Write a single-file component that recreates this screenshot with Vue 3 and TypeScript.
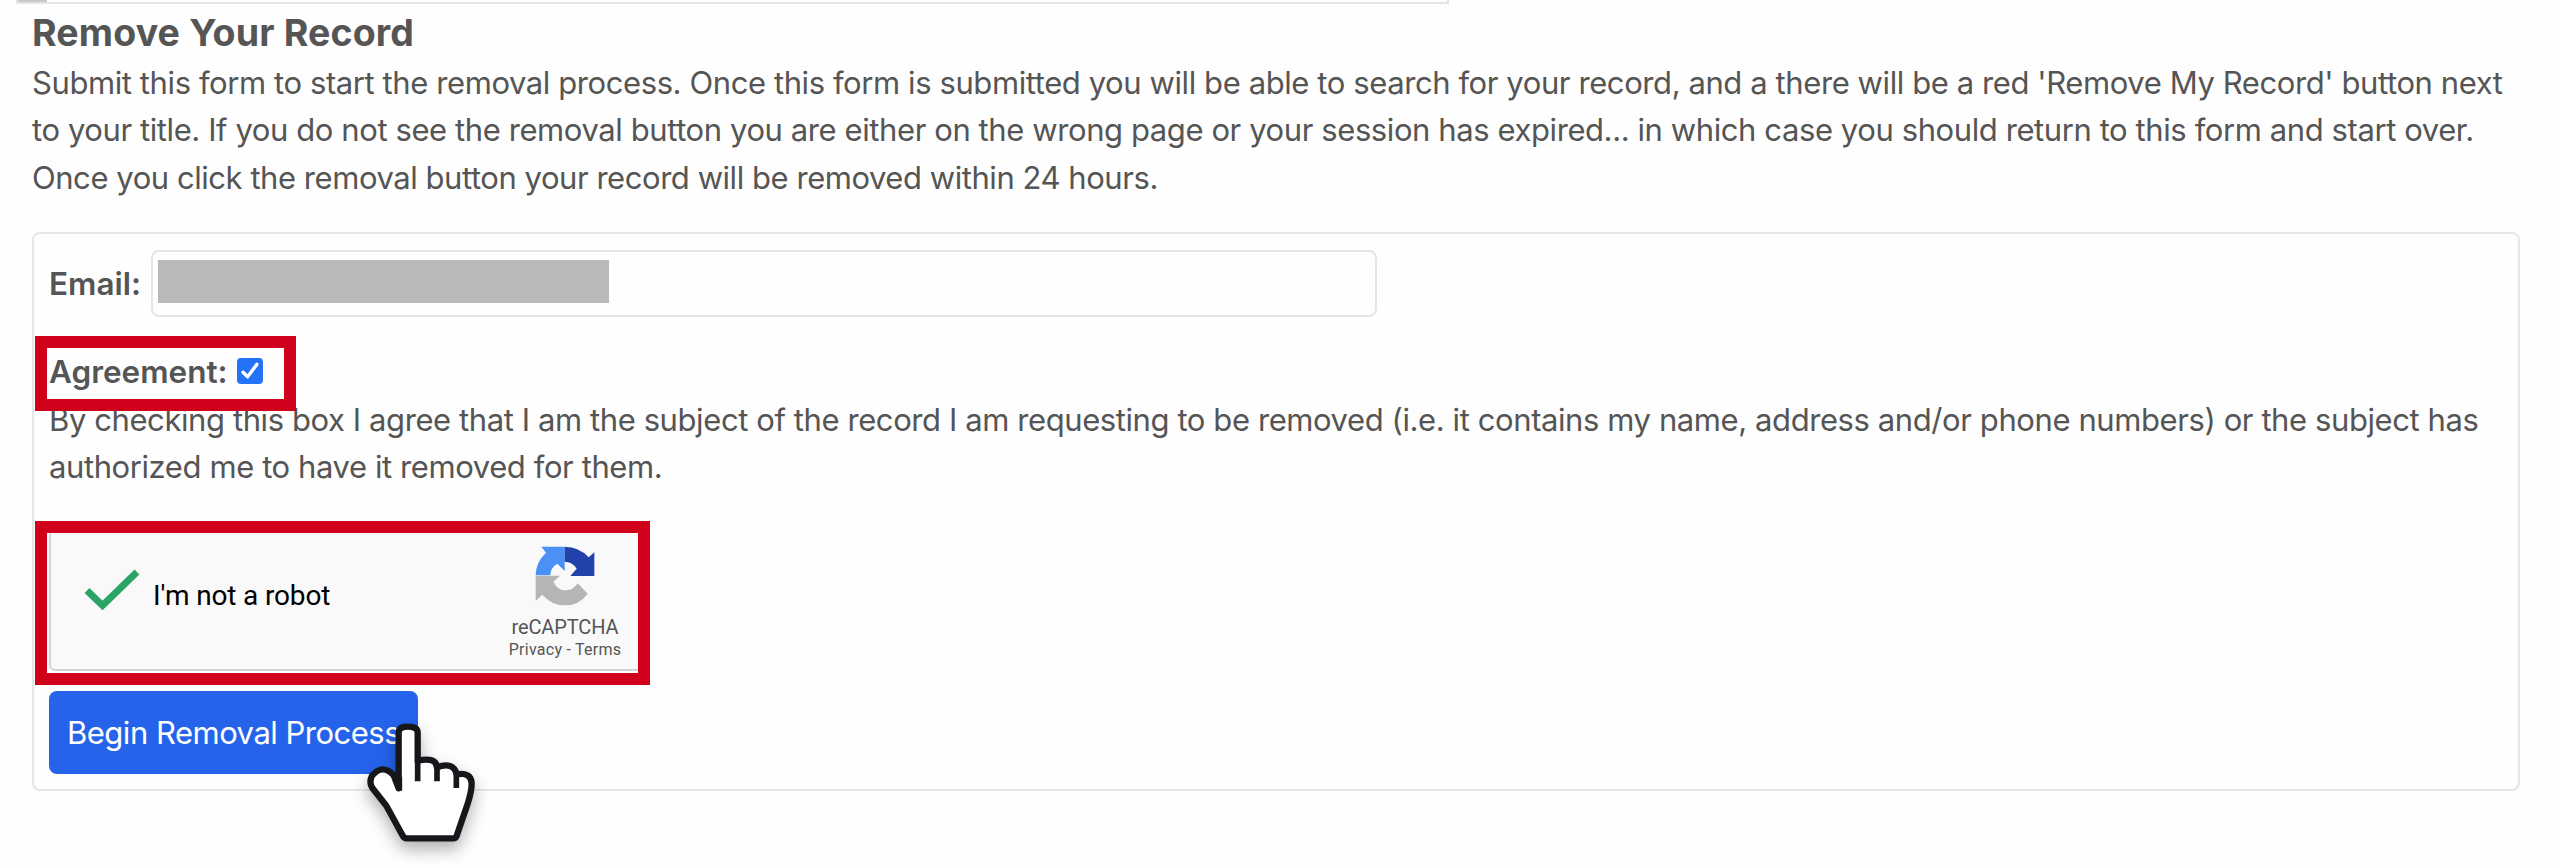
<script setup lang="ts">
import { ref } from 'vue'

const agreed = ref<boolean>(true)
</script>

<template>
  <main class="page">
    <div class="tab-strip"><span class="tab-stub"></span></div>

    <h1 class="title"><span>Remove Your Record</span></h1>
    <p class="intro">
      <span class="line wide">Submit this form to start the removal process. Once this form is submitted you will be able to search for your record, and a there will be a red 'Remove My Record' button next</span>
      <span class="line wide">to your title. If you do not see the removal button you are either on the wrong page or your session has expired... in which case you should return to this form and start over.</span>
      <span class="line">Once you click the removal button your record will be removed within 24 hours.</span>
    </p>

    <form class="card" @submit.prevent>
      <div class="email-row">
        <span class="label email-label">Email:</span>
        <div class="input"><span class="redacted"></span></div>
      </div>

      <div class="agree-row">
        <span class="label agree-label">Agreement:</span>
        <button type="button" class="checkbox" role="checkbox" :aria-checked="agreed" @click="agreed = !agreed">
          <svg v-if="agreed" viewBox="0 0 26 26"><path d="M6 14.2 L10.6 18.8 L19.8 6.4" fill="none" stroke="#fff" stroke-width="3.4" stroke-linecap="round" stroke-linejoin="round" /></svg>
        </button>
        <span class="frame frame-agree"></span>
      </div>
      <p class="terms">
        <span class="line wide">By checking this box I agree that I am the subject of the record I am requesting to be removed (i.e. it contains my name, address and/or phone numbers) or the subject has</span>
        <span class="line wide">authorized me to have it removed for them.</span>
      </p>

      <div class="captcha">
        <svg class="tick" viewBox="0 0 60 48"><path d="M5 24.5 L20.5 39.5 L55 6" fill="none" stroke="#2ba566" stroke-width="7" /></svg>
        <span class="robot">I'm not a robot</span>
        <div class="brand">
          <svg class="logo" viewBox="166 75 180 180">
            <path fill="#4a90f5" d="M185 77H255V150L233 128Q213 139 212 163H168Q168 124 199 95Z" />
            <path fill="#2142ab" d="M255 77Q299 77 327 109L344 94V165H272L291 143Q278 122 255 122Z" />
            <path fill="#b5b5b5" d="M168 164H241L221 182Q234 208 257 208Q281 208 294 187L324 218Q299 253 256 253Q215 253 188 221L168 240Z" />
          </svg>
          <span class="brand-name">reCAPTCHA</span>
          <span class="brand-links">Privacy - Terms</span>
        </div>
        <span class="frame frame-captcha"></span>
      </div>

      <button type="submit" class="submit">
        <span>Begin Removal Process</span>
        <svg class="cursor" viewBox="0 0 480 564">
          <path
            d="M176 325V158Q176 140 203 140Q233 140 233 158V242Q288 230 291 262Q340 244 350 283Q394 276 395 310Q395 336 382 374L349 470Q346 475 340 475H200Q192 475 187 465L139 377L97 324Q86 307 96 287Q128 250 161 286Z"
            fill="#fff" stroke="#15171b" stroke-width="19" stroke-linejoin="round"
          />
          <path d="M233 242V304M291 258V304M349 278V324M178 290V332" fill="none" stroke="#15171b" stroke-width="17" />
        </svg>
      </button>
    </form>
  </main>
</template>

<style>
body {
  margin: 0;
  background: #fefefe;
}
</style>

<style scoped>
* {
  box-sizing: border-box;
}
.page {
  height: 868px;
  overflow: hidden;
  padding: 0 40px 0 32px;
  color: #555;
  font: 31px/47.25px Inter, "Liberation Sans", sans-serif;
  letter-spacing: -0.45px;
}
.tab-strip {
  width: 1433px;
  height: 4px;
  margin-left: -16px;
  border: 2px solid #e4e4e4;
  border-top: 0;
}
.tab-stub {
  display: block;
  width: 29px;
  height: 2px;
  background: #c8c8c8;
}
.title {
  margin: 5px 0 3px;
  height: 47px;
  font-size: 37.5px;
  font-weight: 700;
  line-height: 47px;
  letter-spacing: 0.15px;
}
p {
  margin: 0;
}
.line {
  display: block;
  width: max-content;
  white-space: nowrap;
}
.wide {
  letter-spacing: -0.408px;
}
.intro {
  height: 173px;
}
.card {
  height: 559px;
  padding: 16px 16px 0 15px;
  border: 2px solid #e6e6e6;
  border-radius: 8px;
}
.label {
  font-size: 31.5px;
  font-weight: 600;
  letter-spacing: 0;
}
.email-row {
  display: flex;
  align-items: center;
  gap: 11px;
  height: 67px;
}
.email-label {
  width: 91px;
}
.input {
  width: 1226px;
  height: 67px;
  padding: 8px 5px;
  border: 2px solid #e5e5e5;
  border-radius: 8px;
}
.redacted {
  display: block;
  width: 451px;
  height: 43px;
  background: #bababa;
}
.agree-row {
  position: relative;
  display: flex;
  height: 48px;
  margin-top: 31px;
}
.agree-label {
  width: 188px;
}
.checkbox {
  width: 26px;
  height: 26px;
  margin-top: 10px;
  padding: 0;
  border: 0;
  border-radius: 4px;
  background: #2473f7;
}
.checkbox svg {
  display: block;
}
.frame {
  position: absolute;
  border: 12px solid #d0021b;
}
.frame-agree {
  left: -14px;
  top: -12px;
  width: 261px;
  height: 75px;
}
.terms {
  height: 127px;
}
.captcha {
  position: relative;
  display: flex;
  width: 598px;
  height: 148px;
  border: 2px solid #d3d3d3;
  border-radius: 6px;
  background: #f9f9f9;
  font-family: Roboto, sans-serif;
}
.tick {
  flex: none;
  width: 60px;
  height: 48px;
  margin: 41px 0 0 31px;
}
.robot {
  flex: none;
  margin: 49px 0 0 11px;
  width: 308px;
  color: #000;
  font-size: 28px;
  line-height: 44px;
  letter-spacing: -0.15px;
  white-space: nowrap;
}
.brand {
  flex: none;
  display: flex;
  flex-direction: column;
  align-items: center;
  width: 120px;
  margin-left: 44px;
  padding-top: 21px;
}
.logo {
  width: 60px;
  height: 60px;
}
.brand-name {
  margin-top: 8px;
  font-size: 20px;
  line-height: 26px;
  letter-spacing: -0.1px;
}
.brand-links {
  font-size: 16px;
  line-height: 20px;
  letter-spacing: 0.25px;
}
.frame-captcha {
  left: -16px;
  top: -4px;
  width: 615px;
  height: 164px;
}
.submit {
  position: relative;
  display: block;
  width: 369px;
  height: 83px;
  margin-top: 20px;
  padding: 0 0 0 18px;
  border: 0;
  border-radius: 8px;
  background: #2563eb;
  color: #fff;
  font: inherit;
  letter-spacing: -0.5px;
  text-align: left;
  white-space: nowrap;
}
.cursor {
  position: absolute;
  left: 291px;
  top: -11px;
  width: 160px;
  height: 188px;
  overflow: visible;
  filter: drop-shadow(0 8px 8px rgba(0, 0, 0, 0.3));
}
</style>
